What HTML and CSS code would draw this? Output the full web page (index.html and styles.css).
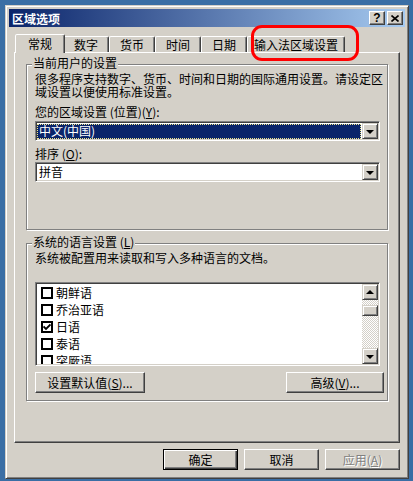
FILE: index.html
```html
<!DOCTYPE html>
<html lang="zh-CN">
<head>
    <meta charset="UTF-8">
    <meta name="viewport" content="width=device-width, initial-scale=1.0">
    <title>区域选项</title>
    <link rel="stylesheet" href="styles.css">
</head>
<body>
    <div class="window">
        <div class="titlebar">
            <span class="title">区域选项</span>
            <div class="caption-buttons">
                <button class="cap-btn help">?</button>
                <button class="cap-btn close">
                    <svg width="8" height="7" viewBox="0 0 8 7"><path d="M0.5 0.5 L7.5 6.5 M7.5 0.5 L0.5 6.5" stroke="#000" stroke-width="1.6"/></svg>
                </button>
            </div>
        </div>

        <div class="dialog-body">
            <div class="tabs">
                <div class="tab active">常规</div>
                <div class="tab tab-num">数字</div>
                <div class="tab tab-cur">货币</div>
                <div class="tab tab-time">时间</div>
                <div class="tab tab-date">日期</div>
                <div class="tab tab-ime">输入法区域设置</div>
            </div>

            <div class="panel">
                <div class="group group-user">
                    <div class="group-title">当前用户的设置</div>
                    <p class="desc">很多程序支持数字、货币、时间和日期的国际通用设置。请设定区域设置以便使用标准设置。</p>
                    <div class="field-label">您的区域设置 (位置)(<u>Y</u>):</div>
                    <div class="combo">
                        <div class="combo-value selected">中文(中国)</div>
                        <div class="combo-btn"><span class="arrow-down"></span></div>
                    </div>
                    <div class="field-label label-sort">排序 (<u>O</u>):</div>
                    <div class="combo combo-sort">
                        <div class="combo-value">拼音</div>
                        <div class="combo-btn"><span class="arrow-down"></span></div>
                    </div>
                </div>

                <div class="group group-lang">
                    <div class="group-title">系统的语言设置 (<u>L</u>)</div>
                    <p class="desc">系统被配置用来读取和写入多种语言的文档。</p>
                    <div class="listbox">
                        <div class="list-items">
                            <div class="list-row"><span class="check"></span>朝鲜语</div>
                            <div class="list-row"><span class="check"></span>乔治亚语</div>
                            <div class="list-row"><span class="check checked"><svg width="8" height="8" viewBox="0 0 8 8"><path d="M0.5 3.5 L3 6 L7.5 1.5" fill="none" stroke="#000" stroke-width="1.8"/></svg></span>日语</div>
                            <div class="list-row"><span class="check"></span>泰语</div>
                            <div class="list-row"><span class="check"></span>突厥语</div>
                        </div>
                        <div class="scrollbar">
                            <div class="sb-btn"><span class="arrow-up"></span></div>
                            <div class="sb-track"><div class="sb-thumb"></div></div>
                            <div class="sb-btn"><span class="arrow-down"></span></div>
                        </div>
                    </div>
                    <div class="group-buttons">
                        <button class="btn btn-default-val">设置默认值(<u>S</u>)...</button>
                        <button class="btn btn-advanced">高级(<u>V</u>)...</button>
                    </div>
                </div>
            </div>

            <div class="footer">
                <button class="btn btn-footer btn-ok">确定</button>
                <button class="btn btn-footer">取消</button>
                <button class="btn btn-footer disabled">应用(<u>A</u>)</button>
            </div>
        </div>

        <div class="highlight-ring"></div>
    </div>
</body>
</html>
```

FILE: styles.css
```css
* {
    box-sizing: border-box;
}

body {
    margin: 0;
    background: #3a6ea5;
    font-family: "Noto Sans CJK SC", "Liberation Sans", sans-serif;
    font-size: 12px;
    line-height: 13px;
    color: #000;
}

button {
    font: inherit;
    color: inherit;
    margin: 0;
}

.window {
    position: relative;
    width: 404px;
    height: 474px;
    margin: 5px 0 0 5px;
    padding: 3px;
    background: #d4d0c8;
    border: 1px solid;
    border-color: #d4d0c8 #404040 #404040 #d4d0c8;
    box-shadow: inset 1px 1px 0 #fff, inset -1px -1px 0 #808080;
    display: flex;
    flex-direction: column;
}

/* title bar */
.titlebar {
    height: 18px;
    display: flex;
    align-items: center;
    padding: 0 2px 0 3px;
    background: linear-gradient(to right, #0a246a, #a6caf0);
}

.title {
    color: #fff;
    font-weight: bold;
}

.caption-buttons {
    margin-left: auto;
    display: flex;
    gap: 2px;
}

.cap-btn {
    width: 16px;
    height: 14px;
    padding: 0;
    display: flex;
    align-items: center;
    justify-content: center;
    background: #d4d0c8;
    border: 1px solid;
    border-color: #fff #404040 #404040 #fff;
    box-shadow: inset -1px -1px 0 #808080;
}

.cap-btn.help {
    font-family: "Liberation Sans", sans-serif;
    font-weight: bold;
    font-size: 12px;
    line-height: 12px;
}

/* body */
.dialog-body {
    flex: 1;
    padding: 7px 5px 0 5px;
}

.tabs {
    display: flex;
    align-items: flex-end;
    height: 18px;
    padding-left: 3px;
}

.tab {
    height: 16px;
    width: 46px;
    padding-top: 1px;
    text-align: center;
    border: 1px solid;
    border-bottom: none;
    border-color: #fff #404040 transparent #fff;
    border-radius: 2px 2px 0 0;
    box-shadow: inset -1px 0 0 #808080;
}

.tab.active {
    position: relative;
    z-index: 1;
    width: 50px;
    height: 19px;
    margin: 0 -2px -1px -2px;
    padding-top: 2px;
    background: #d4d0c8;
}

.tab-ime {
    width: 98px;
}

.panel {
    height: 391px;
    padding: 11px 0 0 11px;
    border: 1px solid;
    border-color: #fff #404040 #404040 #fff;
    box-shadow: inset -1px -1px 0 #808080;
}

/* group boxes */
.group {
    width: 362px;
    padding: 0 2px 0 8px;
    border: 1px solid #808080;
    box-shadow: 1px 1px 0 #fff, inset 1px 1px 0 #fff;
}

.group-user {
    height: 166px;
}

.group-lang {
    height: 158px;
    margin-top: 13px;
}

.group-title {
    width: fit-content;
    margin: -9px 0 0 -3px;
    padding: 0 1px;
    background: #d4d0c8;
}

.desc {
    margin: 3px 0 0 0;
}

.field-label {
    margin-top: 7px;
}

.label-sort {
    margin-top: 6px;
}

/* combo boxes */
.combo {
    width: 345px;
    height: 20px;
    margin-top: 3px;
    padding: 1px;
    display: flex;
    background: #fff;
    border: 1px solid;
    border-color: #808080 #fff #fff #808080;
    box-shadow: inset 1px 1px 0 #404040, inset -1px -1px 0 #d4d0c8;
}

.combo-sort {
    margin-top: 2px;
}

.combo-value {
    flex: 1;
    padding: 0 0 0 2px;
    margin: 1px 1px 0 0;
    line-height: 13px;
}

.combo-value.selected {
    background: #0a246a;
    color: #fff;
    outline: 1px dotted #f0e68c;
    outline-offset: -1px;
}

.combo-btn {
    width: 16px;
    height: 16px;
    display: flex;
    align-items: center;
    justify-content: center;
    background: #d4d0c8;
    border: 1px solid;
    border-color: #d4d0c8 #404040 #404040 #d4d0c8;
    box-shadow: inset 1px 1px 0 #fff, inset -1px -1px 0 #808080;
}

.arrow-down,
.arrow-up {
    width: 0;
    height: 0;
    border-left: 4px solid transparent;
    border-right: 4px solid transparent;
}

.arrow-down {
    border-top: 4px solid #000;
    margin-top: 1px;
}

.arrow-up {
    border-bottom: 4px solid #000;
    margin-top: -1px;
}

/* list box */
.listbox {
    width: 345px;
    height: 84px;
    margin-top: 18px;
    display: flex;
    background: #fff;
    border: 1px solid;
    border-color: #808080 #fff #fff #808080;
    box-shadow: inset 1px 1px 0 #404040, inset -1px -1px 0 #d4d0c8;
    padding: 1px;
}

.list-items {
    flex: 1;
    overflow: hidden;
}

.list-row {
    height: 17px;
    display: flex;
    align-items: center;
    padding-left: 4px;
    white-space: nowrap;
}

.check {
    width: 12px;
    height: 12px;
    margin-right: 3px;
    border: 2px solid #000;
    background: #fff;
    display: flex;
    align-items: center;
    justify-content: center;
}

.scrollbar {
    width: 16px;
    display: flex;
    flex-direction: column;
}

.sb-btn {
    height: 16px;
    display: flex;
    align-items: center;
    justify-content: center;
    background: #d4d0c8;
    border: 1px solid;
    border-color: #d4d0c8 #404040 #404040 #d4d0c8;
    box-shadow: inset 1px 1px 0 #fff, inset -1px -1px 0 #808080;
}

.sb-track {
    flex: 1;
    padding-top: 5px;
    background: repeating-conic-gradient(#fff 0 25%, #d4d0c8 0 50%) 0 0 / 2px 2px;
}

.sb-thumb {
    height: 11px;
    background: #d4d0c8;
    border: 1px solid;
    border-color: #d4d0c8 #404040 #404040 #d4d0c8;
    box-shadow: inset 1px 1px 0 #fff, inset -1px -1px 0 #808080;
}

/* buttons */
.btn {
    height: 21px;
    padding: 0;
    background: #d4d0c8;
    border: 1px solid;
    border-color: #fff #404040 #404040 #fff;
    box-shadow: inset -1px -1px 0 #808080;
    line-height: 13px;
}

.group-buttons {
    display: flex;
    justify-content: space-between;
    margin-top: 6px;
    padding-right: 1px;
}

.btn-default-val {
    width: 110px;
}

.btn-advanced {
    width: 98px;
}

.footer {
    display: flex;
    justify-content: flex-end;
    gap: 6px;
    margin-top: 6px;
}

.btn-footer {
    width: 75px;
}

.btn-ok {
    border-color: #000;
    box-shadow: inset 1px 1px 0 #fff, inset -1px -1px 0 #404040, inset -2px -2px 0 #808080;
}

.btn.disabled {
    color: #808080;
    text-shadow: 1px 1px 0 #fff;
}

/* red annotation drawn over the tab strip */
.highlight-ring {
    position: absolute;
    left: 245px;
    top: 19px;
    width: 108px;
    height: 36px;
    border: 3px solid #f00;
    border-radius: 11px;
}
```
